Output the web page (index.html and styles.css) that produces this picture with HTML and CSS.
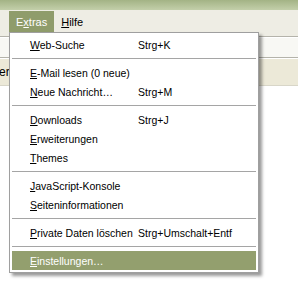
FILE: index.html
```html
<!DOCTYPE html>
<html>
<head>
<meta charset="utf-8">
<title>Extras</title>
<link rel="stylesheet" href="styles.css">
</head>
<body>
<div class="window">
  <div class="titlebar"></div>
  <div class="menubar">
    <span class="menu-title active">E<u>x</u>tras</span>
    <span class="menu-title"><u>H</u>ilfe</span>
  </div>
  <div class="toolbar-top"></div>
  <div class="toolbar-light"></div>
  <div class="toolbar-buttons"><span class="button-text">er</span></div>
  <div class="content"></div>

  <div class="dropdown">
    <div class="item"><span><u>W</u>eb-Suche</span><span>Strg+K</span></div>
    <div class="sep"></div>
    <div class="item"><span><u>E</u>-Mail lesen (0 neue)</span><span></span></div>
    <div class="item"><span><u>N</u>eue Nachricht…</span><span>Strg+M</span></div>
    <div class="sep"></div>
    <div class="item"><span><u>D</u>ownloads</span><span>Strg+J</span></div>
    <div class="item"><span><u>E</u>rweiterungen</span><span></span></div>
    <div class="item"><span><u>T</u>hemes</span><span></span></div>
    <div class="sep"></div>
    <div class="item"><span><u>J</u>avaScript-Konsole</span><span></span></div>
    <div class="item"><span><u>S</u>eiteninformationen</span><span></span></div>
    <div class="sep"></div>
    <div class="item"><span><u>P</u>rivate Daten löschen</span><span>Strg+Umschalt+Entf</span></div>
    <div class="sep"></div>
    <div class="item selected"><span><u>E</u>instellungen…</span><span></span></div>
  </div>
</div>
</body>
</html>
```
FILE: styles.css
```css
body {
  margin: 0;
  background-color: white;
  font-family: "Liberation Sans", Arial, sans-serif;
  font-size: 11px;
  color: black;
}

.window {
  position: relative;
  width: 298px;
  height: 297px;
  overflow: hidden;
}

.titlebar {
  height: 10px;
  background: linear-gradient(#a3b385, #c3cfaa);
}

.menubar {
  height: 22px;
  background-color: #eeede4;
  display: flex;
  align-items: stretch;
  padding-left: 9px;
}

.menu-title {
  display: flex;
  align-items: center;
  padding: 1px 7px 0 7px;
  margin-top: 1px;
}

.menu-title.active {
  background-color: #8f9c6b;
  color: white;
}

.toolbar-top {
  height: 4px;
  background-color: #eeede4;
  border-bottom: 1px solid #b4b3aa;
}

.toolbar-light {
  height: 19px;
  background-color: #f8f8f4;
  border-top: 1px solid #ffffff;
  border-bottom: 1px solid #b4b3aa;
}

.toolbar-buttons {
  height: 26px;
  background-color: #ece9d8;
  border-top: 1px solid #ffffff;
  border-bottom: 1px solid #d8d6c8;
  display: flex;
  align-items: center;
}

.button-text {
  margin-left: -1px;
  font-size: 12px;
}

.content {
  height: 214px;
  background-color: white;
}

/* the open Extras menu */
.dropdown {
  position: absolute;
  left: 9px;
  top: 32px;
  width: 244px;
  padding: 2px;
  background-color: white;
  border: 1px solid #9f9f9f;
  box-shadow: 3px 3px 3px rgba(0, 0, 0, 0.4);
  font-size: 10.5px;
}

.item {
  height: 19px;
  display: grid;
  grid-template-columns: 108px auto;
  align-items: center;
  padding-left: 18px;
}

.item.selected {
  background-color: #939f6e;
  color: white;
}

.sep {
  height: 1px;
  margin: 4px 0 4px 0;
  background-color: #a5a5a5;
}
```
